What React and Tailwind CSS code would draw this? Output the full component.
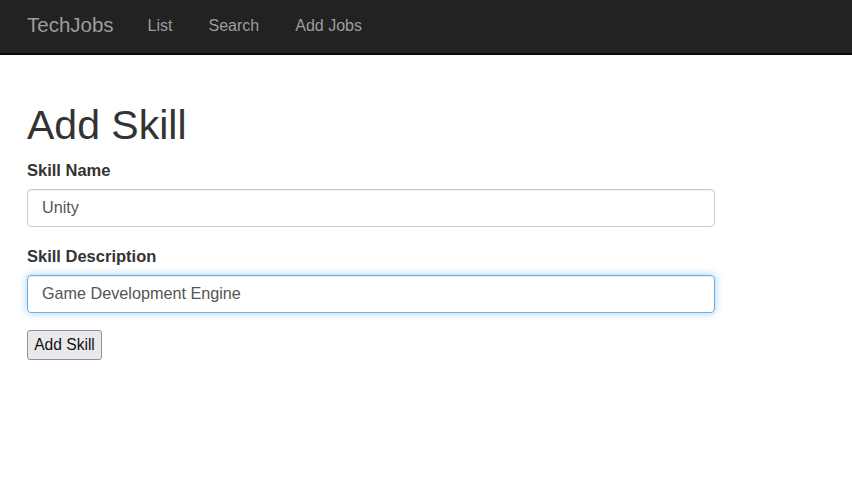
import React, { useState } from 'react';

export default function App() {
    const [name, setName] = useState("Unity");
    const [desc, setDesc] = useState("Game Development Engine");

    return (
        <div className="min-h-[499px] bg-white text-[#333] font-['Liberation_Sans',Arial,sans-serif]">
            <nav className="h-[55px] bg-[#222] border-b-2 border-[#080808] flex items-center px-[27px] pb-[2px]">
                <span className="text-[20.5px] text-[#9d9d9d] mr-[34px]">TechJobs</span>
                <ul className="flex items-center gap-[36px] text-[16px] text-[#9d9d9d]">
                    <li>List</li>
                    <li>Search</li>
                    <li>Add Jobs</li>
                </ul>
            </nav>

            <div className="px-[27px]">
                <h1 className="text-[41px] leading-[1.1] mt-[48px] mb-[10px]">Add Skill</h1>
                <form className="w-[688px]" onSubmit={e => e.preventDefault()}>
                    <div className="mb-[17px]">
                        <label className="block text-[16.5px] font-bold mb-[6px]">Skill Name</label>
                        <input
                            value={name}
                            onChange={e => setName(e.target.value)}
                            className="w-full h-[38px] px-[14px] text-[16.2px] text-[#555] border border-[#ccc] rounded-[4px] shadow-[inset_0_1px_1px_rgba(0,0,0,0.075)] outline-none"
                        />
                    </div>
                    <div className="mb-[17px]">
                        <label className="block text-[16.5px] font-bold mb-[6px]">Skill Description</label>
                        <input
                            value={desc}
                            onChange={e => setDesc(e.target.value)}
                            className="w-full h-[38px] px-[14px] text-[16.2px] text-[#555] border border-[#66afe9] rounded-[4px] shadow-[inset_0_1px_1px_rgba(0,0,0,0.075),0_0_8px_rgba(102,175,233,0.6)] outline-none"
                        />
                    </div>
                    <button type="submit" className="h-[30px] w-[75px] text-[15.6px] text-[#111] bg-[#e9e9ed] border border-[#8f8f9d] rounded-[3px]">
                        Add Skill
                    </button>
                </form>
            </div>
        </div>
    );
}
